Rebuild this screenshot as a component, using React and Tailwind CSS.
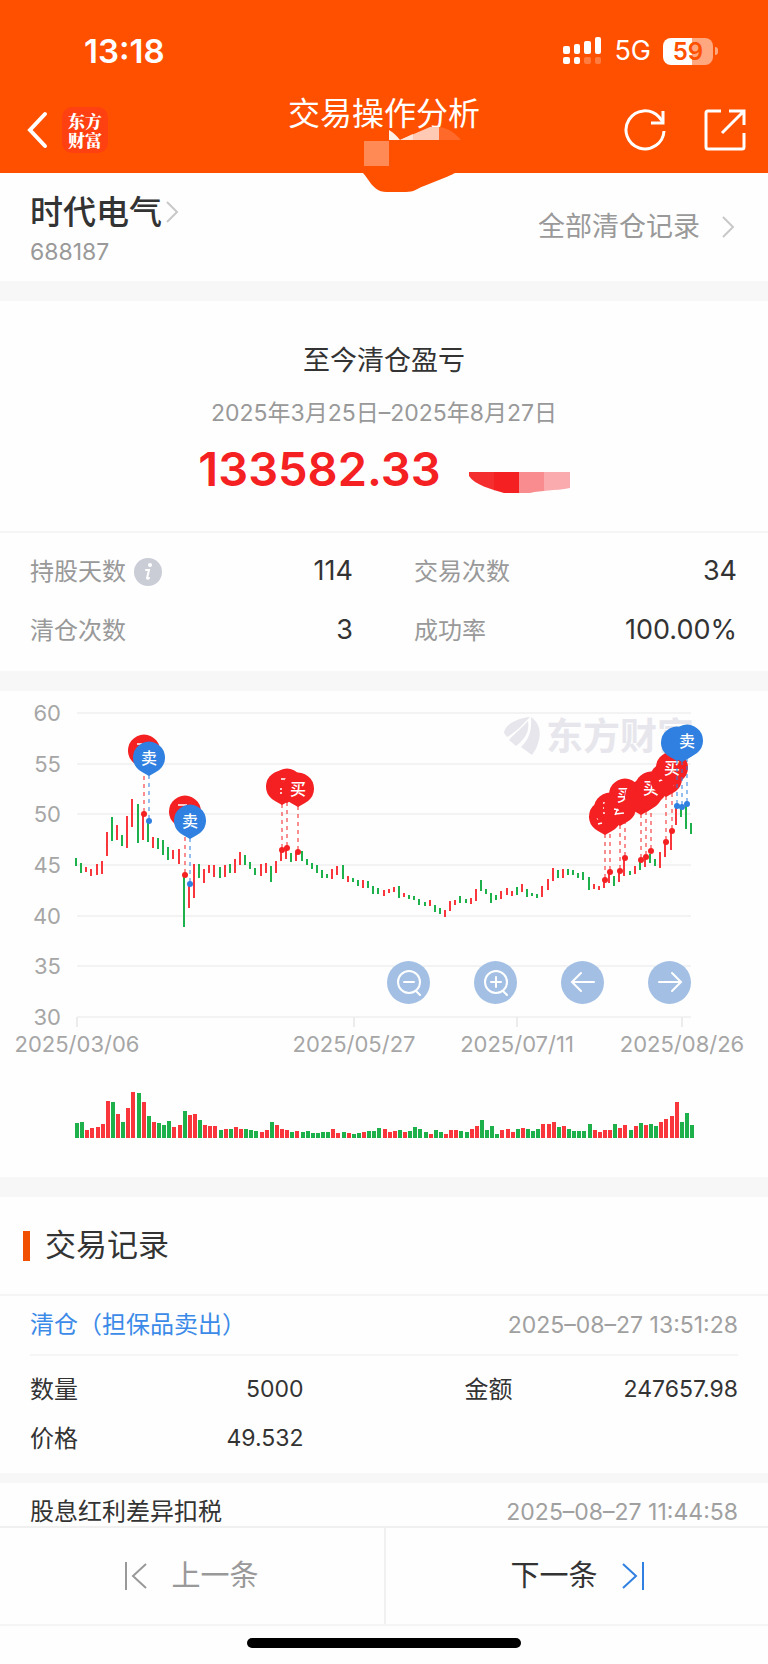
const UP = "#f9363c";
const DOWN = "#1db04b";
const BUY = "#f42022";
const SELL = "#2f80e0";

// [direction, high y, low y, volume]
const CANDLES = [
  ["d", 167, 175, 15], ["d", 172, 182, 16], ["u", 176, 181, 8], ["u", 178, 185, 10], ["u", 173, 184, 11],
  ["u", 170, 183, 14], ["u", 141, 165, 37], ["d", 126, 150, 36], ["u", 134, 149, 24], ["d", 144, 155, 16],
  ["u", 125, 157, 30], ["u", 108, 136, 46], ["d", 113, 152, 45], ["u", 123, 149, 36], ["d", 130, 151, 22],
  ["u", 146, 157, 16], ["d", 147, 158, 15], ["d", 149, 164, 13], ["d", 156, 169, 17], ["u", 159, 168, 11],
  ["u", 158, 173, 13], ["d", 184, 236, 27], ["u", 195, 217, 23], ["u", 173, 207, 24], ["d", 173, 187, 18],
  ["u", 178, 192, 13], ["u", 174, 182, 12], ["u", 174, 186, 12], ["d", 176, 187, 8], ["u", 174, 186, 9],
  ["d", 173, 182, 9], ["u", 168, 182, 11], ["u", 161, 174, 9], ["d", 164, 174, 9], ["d", 171, 178, 8],
  ["d", 177, 184, 7], ["u", 173, 185, 6], ["u", 172, 182, 8], ["d", 175, 191, 16], ["u", 170, 182, 13],
  ["u", 160, 170, 9], ["u", 159, 168, 8], ["d", 162, 171, 6], ["u", 162, 170, 7], ["d", 160, 170, 6],
  ["d", 168, 174, 7], ["d", 172, 178, 5], ["d", 174, 182, 5], ["d", 179, 187, 6], ["d", 183, 187, 6],
  ["u", 178, 188, 9], ["u", 175, 184, 5], ["d", 174, 188, 6], ["u", 185, 191, 5], ["d", 187, 191, 4],
  ["d", 189, 195, 5], ["u", 189, 197, 6], ["d", 190, 197, 7], ["d", 195, 203, 7], ["d", 197, 203, 10],
  ["u", 199, 205, 9], ["u", 198, 202, 6], ["u", 196, 201, 7], ["d", 195, 207, 8], ["u", 202, 206, 6],
  ["d", 204, 208, 7], ["d", 205, 209, 11], ["d", 208, 214, 9], ["d", 211, 215, 6], ["u", 209, 215, 4],
  ["d", 214, 221, 8], ["d", 217, 223, 6], ["u", 219, 226, 4], ["u", 210, 220, 8], ["u", 209, 214, 8],
  ["d", 205, 212, 7], ["d", 208, 212, 6], ["u", 207, 213, 9], ["u", 198, 210, 12], ["d", 189, 200, 18],
  ["d", 198, 203, 8], ["d", 202, 212, 12], ["d", 204, 209, 4], ["u", 200, 208, 8], ["u", 197, 204, 9],
  ["u", 200, 205, 6], ["d", 196, 204, 9], ["u", 193, 201, 10], ["d", 198, 206, 9], ["d", 202, 205, 7],
  ["d", 203, 207, 9], ["u", 195, 206, 14], ["u", 188, 199, 14], ["u", 177, 190, 16], ["d", 179, 187, 11],
  ["u", 178, 187, 12], ["d", 178, 184, 9], ["d", 179, 184, 7], ["d", 182, 187, 7], ["d", 181, 189, 7],
  ["d", 186, 199, 14], ["u", 193, 198, 8], ["u", 195, 199, 6], ["u", 189, 197, 8], ["u", 181, 192, 8],
  ["d", 185, 195, 14], ["u", 180, 191, 10], ["u", 167, 185, 13], ["d", 180, 184, 8], ["u", 175, 183, 12],
  ["d", 170, 179, 15], ["u", 166, 176, 13], ["d", 163, 172, 14], ["d", 168, 175, 12], ["u", 161, 177, 16],
  ["u", 151, 166, 19], ["u", 140, 159, 22], ["u", 117, 134, 36], ["d", 117, 126, 16], ["d", 114, 138, 25],
  ["d", 132, 143, 13],
];

// A pin buried under its neighbours has no label, only the stroke that still peeks out
const TRADES = [
  { x: 144, y: 123, side: "buy", peek: "M137 53h9" },
  { x: 149, y: 130, side: "sell", label: true },
  { x: 185, y: 184, side: "buy", peek: "M178 114h9" },
  { x: 190, y: 193, side: "sell", label: true },
  { x: 282, y: 159, side: "buy" },
  { x: 287, y: 157, side: "buy", peek: "M281 88h5l-2 4M281 97v2M281 101v2" },
  { x: 298, y: 161, side: "buy", label: true },
  { x: 605, y: 189, side: "buy", peek: "M598 133l4-1M597 128l2-1" },
  { x: 610, y: 181, side: "buy", peek: "M604 111v2M604 116v2M604 121v2" },
  { x: 620, y: 180, side: "buy", peek: "M614 118l5 1M615 123l9-1M619 115l-4 9" },
  { x: 625, y: 167, side: "buy", label: true },
  { x: 641, y: 169, side: "buy", peek: "M640 109v2" },
  { x: 646, y: 166, side: "buy" },
  { x: 651, y: 160, side: "buy", label: true },
  { x: 666, y: 151, side: "buy", peek: "M659 90l5-2M661 84l3-2M671 92l3 2" },
  { x: 672, y: 140, side: "buy", label: true },
  { x: 677, y: 115, side: "sell", peek: "M675 60l1 1" },
  { x: 682, y: 116, side: "sell" },
  { x: 687, y: 113, side: "sell", label: true },
];

const PRICES = [60, 55, 50, 45, 40, 35, 30];

const DATES = [
  { x: 77, label: "2025/03/06" },
  { x: 354, label: "2025/05/27" },
  { x: 517, label: "2025/07/11" },
  { x: 682, label: "2025/08/26" },
];

const candleX = (i) => Math.round(76 + (i * 615) / 120);
const priceY = (p) => Math.round(22 + ((60 - p) * 304) / 30);

function StatusBar() {
  return (
    <div className="flex h-[84px] items-center justify-between pt-[18px] pr-[50px] pl-[84px]">
      <span className="text-[33px] leading-10 font-semibold">13:18</span>
      <div className="flex items-center">
        <svg width="39" height="28" viewBox="0 0 39 28" fill="#fff" aria-hidden="true">
          <rect x="0" y="9" width="7" height="8" rx="2" />
          <rect x="11" y="7" width="6" height="10" rx="2" />
          <rect x="21" y="4" width="7" height="13" rx="2" />
          <rect x="32" y="0" width="6" height="17" rx="2" />
          <rect x="0" y="20" width="7" height="7" rx="2" />
          <rect x="11" y="20" width="6" height="7" rx="2" />
          <rect x="21" y="20" width="7" height="7" rx="2" opacity="0.25" />
          <rect x="32" y="20" width="6" height="7" rx="2" opacity="0.25" />
        </svg>
        <span className="ml-3 text-[27px] leading-8">5G</span>
        <div className="ml-3 flex h-[27px] w-[50px] items-center justify-center rounded-lg bg-linear-to-r from-white from-59% to-[#ffa77f] to-59% text-2xl leading-[27px] font-semibold text-[#ff5000]">
          59
        </div>
        <div className="ml-0.5 h-2 w-[3px] rounded-r-full bg-[#ffa77f]"></div>
      </div>
    </div>
  );
}

function Header() {
  return (
    <header className="relative shrink-0 bg-[#ff5000] text-white">
      <StatusBar />
      <div className="grid h-[89px] grid-cols-[1fr_auto_1fr] px-[22px]">
        <div className="flex items-center gap-[14px] pt-0.5 pl-0.5">
          <button type="button" aria-label="返回">
            <svg width="24" height="38" viewBox="0 0 24 38" fill="none" stroke="#fff" strokeWidth="4">
              <path d="M21 3 6 19l15 16" strokeLinecap="round" />
            </svg>
          </button>
          <span className="flex size-[46px] flex-col items-center justify-center rounded-[10px] bg-[#ff4010] font-['Noto_Serif_CJK_SC','Noto_Sans_CJK_SC',sans-serif] text-[17px] leading-[19px] font-black">
            <span>东方</span>
            <span>财富</span>
          </span>
        </div>
        <h1 className="text-[32px] leading-[60px]">交易操作分析</h1>
        <div className="flex items-center justify-end gap-[38px] pt-0.5">
          <button type="button" aria-label="刷新">
            <svg width="42" height="42" viewBox="0 0 42 42" fill="none" stroke="#fff" strokeWidth="3">
              <path d="M40 22A19 19 0 1 1 35 8l4 5" />
              <path d="M39 2v12H27" />
            </svg>
          </button>
          <button type="button" aria-label="分享">
            <svg width="42" height="42" viewBox="0 0 42 42" fill="none" stroke="#fff" strokeWidth="3">
              <path d="M17 2H4a2 2 0 0 0-2 2v34a2 2 0 0 0 2 2h34a2 2 0 0 0 2-2V24" />
              <path d="M25 2h15v14M39 3 18 24" />
            </svg>
          </button>
        </div>
      </div>

      {/* Masked account name under the title */}
      <svg className="pointer-events-none absolute top-[126px] left-1/2 -ml-[22px]" width="102" height="67" viewBox="0 0 102 67" aria-hidden="true">
        <path d="M0 46c6 6 9 14 16 18 4 2 7 2 12 2h16c8 0 10-3 18-6l20-8c8-3 8-4 14-6z" fill="#ff5000" />
        <rect x="2" y="15" width="25" height="25" fill="#ff8a55" />
        <path d="M27 4c5 3 8 6 11 10H27z" fill="#ffefe6" />
        <path d="M38 14 68 1h9v13z" fill="#ffc9b3" />
        <path d="M38 14l13-6v6z" fill="#ffe3d6" />
        <path d="M77 1c9 1 16 6 22 13H77z" fill="#ff6a2a" />
      </svg>
    </header>
  );
}

function Chevron() {
  return (
    <svg width="13" height="22" viewBox="0 0 13 22" fill="none" stroke="#c8c8c8" strokeWidth="2" aria-hidden="true">
      <path d="M1 1l10 10L1 21" />
    </svg>
  );
}

function StockBar() {
  return (
    <section className="flex h-[108px] items-center justify-between pr-[33px] pl-[30px]">
      <div className="pt-1">
        <a href="#stock" className="flex items-center gap-1 text-[33px] leading-[46px] font-medium text-[#333]">
          时代电气
          <Chevron />
        </a>
        <p className="text-[23px] leading-[34px] text-[#999]">688187</p>
      </div>
      <a href="#records" className="flex items-center gap-[22px] text-[27px] text-[#999]">
        全部清仓记录
        <Chevron />
      </a>
    </section>
  );
}

function Summary() {
  return (
    <section className="flex h-[230px] flex-col items-center pt-10">
      <h2 className="text-[27px] leading-10 text-[#333]">至今清仓盈亏</h2>
      <p className="mt-3 text-[23px] leading-10 text-[#999]">2025年3月25日–2025年8月27日</p>
      <div className="mt-2 flex items-center gap-7">
        <strong className="text-[47px] leading-[56px] font-semibold text-[#f42022]">133582.33</strong>
        <svg className="mt-7" width="101" height="22" viewBox="0 0 101 22" aria-hidden="true">
          <clipPath id="mask-blob">
            <path d="M0 0h101v16c-16 3-28 2-40 5H35C22 17 6 13 0 4z" />
          </clipPath>
          <g clipPath="url(#mask-blob)">
            <rect width="26" height="22" fill="#f42d2f" />
            <rect x="25" width="26" height="22" fill="#f42022" />
            <rect x="50" width="26" height="22" fill="#f98c8e" />
            <rect x="75" width="26" height="22" fill="#faabad" />
          </g>
        </svg>
      </div>
    </section>
  );
}

function Stat({ label, value, info }) {
  return (
    <div className="flex h-[59px] items-center justify-between">
      <dt className="flex items-center gap-2 text-2xl text-[#999]">
        {label}
        {info && (
          <svg width="28" height="28" viewBox="0 0 28 28" aria-hidden="true">
            <circle cx="14" cy="14" r="14" fill="#cacdd6" />
            <circle cx="16" cy="7" r="2" fill="#fff" />
            <path d="M12 12h3l-2 8c0 1 1 1 2 0" fill="none" stroke="#fff" strokeWidth="2" strokeLinecap="round" />
          </svg>
        )}
      </dt>
      <dd className="text-[27px] text-[#333]">{value}</dd>
    </div>
  );
}

function Stats() {
  return (
    <dl className="grid grid-cols-2 gap-x-[61px] border-t-2 border-[#f5f5f5] pt-[9px] pr-[31px] pb-[11px] pl-[30px]">
      <Stat label="持股天数" value="114" info />
      <Stat label="交易次数" value="34" />
      <Stat label="清仓次数" value="3" />
      <Stat label="成功率" value="100.00%" />
    </dl>
  );
}

function Pin({ x, y, side, label, peek }) {
  const color = side === "buy" ? BUY : SELL;
  const cy = y - 63;
  return (
    <g>
      <path d={`M${x} ${cy + 17}V${y}`} stroke={color} strokeWidth="2" strokeDasharray="4 4" opacity="0.5" />
      <circle cx={x} cy={y} r="3" fill={color} />
      <path d={`M${x} ${cy + 18}l-7-4a16 16 0 1 1 14 0z`} fill={color} />
      {label && (
        <text x={x} y={cy + 6} fontSize="16" fontWeight="500" textAnchor="middle" fill="#fff">
          {side === "buy" ? "买" : "卖"}
        </text>
      )}
      {peek && <path d={peek} stroke="#fff" strokeWidth="1.5" fill="none" />}
    </g>
  );
}

function RoundButton({ label, children }) {
  return (
    <button type="button" aria-label={label} className="flex size-[43px] items-center justify-center rounded-full bg-[#a3c0e4]">
      <svg width="28" height="28" viewBox="0 0 28 28" fill="none" stroke="#fff" strokeWidth="2" strokeLinecap="round">
        {children}
      </svg>
    </button>
  );
}

function Chart() {
  return (
    <section className="relative">
      <svg viewBox="0 0 768 486" className="block w-full" role="img" aria-label="股价走势与买卖点">
        {PRICES.map((p) => (
          <g key={p}>
            <path d={`M77 ${priceY(p)}H691`} stroke="#f3f3f3" strokeWidth="2" />
            <text x="61" y={priceY(p) + 8} fontSize="22" textAnchor="end" fill="#a6a6a6">{p}</text>
          </g>
        ))}
        {DATES.map((d) => (
          <g key={d.label}>
            <path d={`M${d.x} 326v10`} stroke="#ececec" strokeWidth="2" />
            <text x={d.x} y="361" fontSize="22" textAnchor="middle" fill="#a6a6a6">{d.label}</text>
          </g>
        ))}

        {/* Watermark */}
        <g fill="#e6e6ec">
          <path d="M504 42C505 33 518 27 530 26 523 33 515 42 507 46z" />
          <path d="M528 30C522 37 514 43 509 49l7 6c8-6 14-14 12-25z" />
          <path d="M531 26c8 5 11 16 7 26-1 5-4 9-6 12l-11-8c8-8 11-16 10-30z" />
          <text x="546" y="59" fontSize="37" fontWeight="700">东方财富</text>
        </g>

        {CANDLES.map(([dir, high, low, volume], i) => (
          <g key={i} fill={dir === "u" ? UP : DOWN}>
            <rect x={candleX(i) - 1} y={high} width="2" height={low - high} />
            <rect x={candleX(i) - 1} y={447 - volume} width="4" height={volume} />
          </g>
        ))}
        {TRADES.map((t) => (
          <Pin key={t.x} {...t} />
        ))}
      </svg>

      <div className="absolute top-[55.5%] right-[10%] flex gap-11">
        <RoundButton label="缩小">
          <circle cx="14" cy="14" r="11" />
          <path d="M9 14h10M21 23l4 4" />
        </RoundButton>
        <RoundButton label="放大">
          <circle cx="14" cy="14" r="11" />
          <path d="M9 14h10M14 9v10M21 23l4 4" />
        </RoundButton>
        <RoundButton label="前移">
          <path d="M25 14H3M12 5l-9 9 9 9" />
        </RoundButton>
        <RoundButton label="后移">
          <path d="M3 14h22M16 5l9 9-9 9" />
        </RoundButton>
      </div>
    </section>
  );
}

function RecordHead({ title, time, titleClass }) {
  return (
    <div className="mr-[30px] ml-[30px] flex h-[60px] items-center justify-between border-b-2 border-[#f5f5f5]">
      <h3 className={`text-2xl ${titleClass}`}>{title}</h3>
      <time className="text-[23px] text-[#a0a0a0]">{time}</time>
    </div>
  );
}

function Field({ label, value }) {
  return (
    <div className="flex h-[49px] items-center justify-between text-[#333]">
      <dt className="text-2xl">{label}</dt>
      <dd className="text-[23px]">{value}</dd>
    </div>
  );
}

function Records() {
  return (
    <section>
      <div className="flex h-[99px] items-center gap-[15px] border-b-2 border-[#f5f5f5] pl-[23px]">
        <span className="h-[30px] w-[7px] bg-[#f05000]"></span>
        <h2 className="text-[31px] text-[#333]">交易记录</h2>
      </div>
      <RecordHead title="清仓（担保品卖出）" time="2025–08–27 13:51:28" titleClass="text-[#3c8ae8]" />
      <dl className="grid grid-cols-2 gap-x-[161px] px-[30px] pt-[9px] pb-2.5">
        <Field label="数量" value="5000" />
        <Field label="金额" value="247657.98" />
        <Field label="价格" value="49.532" />
      </dl>
      <div className="h-2.5 bg-[#f7f7f7]"></div>
      <RecordHead title="股息红利差异扣税" time="2025–08–27 11:44:58" titleClass="text-[#333]" />
    </section>
  );
}

function BottomNav() {
  return (
    <footer className="shrink-0 border-t-2 border-[#f0f0f0]">
      <div className="grid h-[98px] grid-cols-2 border-b-2 border-[#f5f5f5] text-[29px]">
        <button type="button" className="flex items-center justify-center gap-6 text-[#999]">
          <svg width="22" height="28" viewBox="0 0 22 28" fill="none" stroke="#999" strokeWidth="2" aria-hidden="true">
            <path d="M1 0v28M21 2 8 14l13 12" />
          </svg>
          上一条
        </button>
        <button type="button" className="flex items-center justify-center gap-6 border-l-2 border-[#f0f0f0] text-[#333]">
          下一条
          <svg width="22" height="28" viewBox="0 0 22 28" fill="none" stroke="#2f80e0" strokeWidth="2" aria-hidden="true">
            <path d="M21 0v28M1 2l13 12L1 26" />
          </svg>
        </button>
      </div>
      <div className="flex h-[38px] justify-center pt-3">
        <div className="h-2.5 w-[274px] rounded-full bg-black"></div>
      </div>
    </footer>
  );
}

export default function App() {
  return (
    <div className="flex h-screen flex-col overflow-hidden bg-[#fefefe] font-['Inter','Noto_Sans_CJK_SC',sans-serif]">
      <Header />
      <main className="min-h-0 flex-1 overflow-y-auto [scrollbar-width:none]">
        <StockBar />
        <div className="h-5 bg-[#f7f7f7]"></div>
        <Summary />
        <Stats />
        <div className="h-5 bg-[#f7f7f7]"></div>
        <Chart />
        <div className="h-5 bg-[#f7f7f7]"></div>
        <Records />
      </main>
      <BottomNav />
    </div>
  );
}
